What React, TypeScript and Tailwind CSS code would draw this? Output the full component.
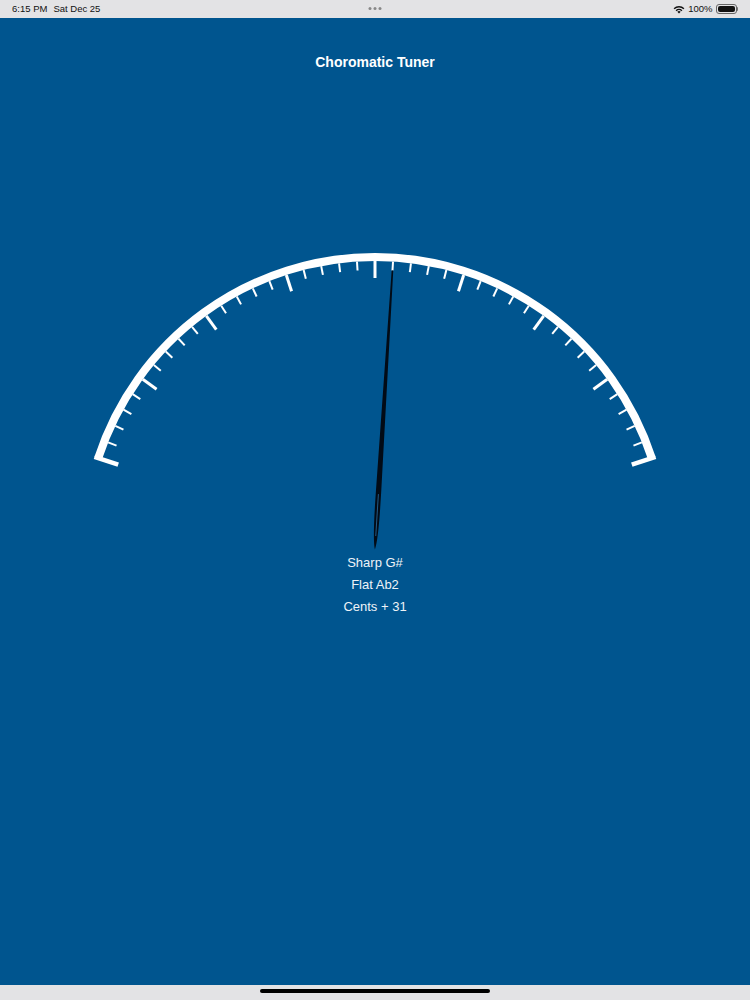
import React from "react";

const CX = 375;
const CY = 308;

function polar(r: number, deg: number) {
  const a = (deg * Math.PI) / 180;
  return { x: CX + r * Math.sin(a), y: CY - r * Math.cos(a) };
}

function Gauge() {
  const ticks = [];
  for (let i = 0; i <= 40; i++) {
    const ang = -72 + 3.6 * i;
    let r1 = 287;
    let r2 = 278;
    let w = 2;
    if (i === 0 || i === 40) {
      r1 = 295;
      r2 = 270;
      w = 4.5;
    } else if (i % 5 === 0) {
      r2 = 270;
      w = 3;
    }
    const p1 = polar(r1, ang);
    const p2 = polar(r2, ang);
    ticks.push(
      <line key={i} x1={p1.x} y1={p1.y} x2={p2.x} y2={p2.y} stroke="#ffffff" strokeWidth={w} />
    );
  }
  const s = polar(291, -72);
  const e = polar(291, 72);
  return (
    <svg width="750" height="312" viewBox="0 0 750 312" className="block overflow-visible">
      <path
        d={`M ${s.x} ${s.y} A 291 291 0 0 1 ${e.x} ${e.y}`}
        fill="none"
        stroke="#ffffff"
        strokeWidth={8}
      />
      {ticks}
      <g transform={`translate(${CX} ${CY}) rotate(3.6)`}>
        <path
          d="M -0.8 -278 L 0.8 -278 L 2.6 -64 C 2.9 -34 2.6 -7 0 1.5 C -2.6 -7 -2.9 -34 -2.6 -64 Z"
          fill="#020b16"
        />
        <line x1="0" y1="-54" x2="0" y2="-12" stroke="#24608f" strokeWidth="0.9" />
      </g>
    </svg>
  );
}

export default function App() {
  return (
    <div
      className="w-[750px] h-[1000px] flex flex-col bg-[#00558f] overflow-hidden"
      style={{ fontFamily: '"Liberation Sans", Arial, sans-serif' }}
    >
      <div className="h-[18px] bg-[#e3e3e5] flex items-center px-[12px] text-[#111] text-[9.5px] relative">
        <span>6:15 PM</span>
        <span className="ml-[6px]">Sat Dec 25</span>
        <div className="absolute left-1/2 -translate-x-1/2 top-[7px] flex gap-[2px]">
          <span className="w-[3px] h-[3px] rounded-full bg-[#888]" />
          <span className="w-[3px] h-[3px] rounded-full bg-[#888]" />
          <span className="w-[3px] h-[3px] rounded-full bg-[#888]" />
        </div>
        <div className="ml-auto flex items-center gap-[3px]">
          <svg width="12" height="9" viewBox="0 0 12 9">
            <path d="M6 8.6 L4.3 6.8 A2.5 2.5 0 0 1 7.7 6.8 Z" fill="#111" />
            <path d="M2.6 5.2 A4.9 4.9 0 0 1 9.4 5.2 L8.4 6.2 A3.5 3.5 0 0 0 3.6 6.2 Z" fill="#111" />
            <path d="M0.6 3.2 A7.7 7.7 0 0 1 11.4 3.2 L10.4 4.2 A6.3 6.3 0 0 0 1.6 4.2 Z" fill="#111" />
          </svg>
          <span>100%</span>
          <div className="flex items-center">
            <div className="w-[21px] h-[10px] rounded-[3px] border border-[#666] p-[1px]">
              <div className="w-full h-full rounded-[2px] bg-[#111]" />
            </div>
            <div className="w-[1.5px] h-[4px] bg-[#777] rounded-r-sm" />
          </div>
        </div>
      </div>
      <div className="flex-1 flex flex-col items-center">
        <div className="mt-[35px] text-white font-bold text-[14px] leading-[18px]">
          Choromatic Tuner
        </div>
        <div className="mt-[169px]">
          <Gauge />
        </div>
        <div className="flex flex-col items-center text-[#eef3f8] text-[13px] leading-[22px]">
          <span>Sharp G#</span>
          <span>Flat Ab2</span>
          <span>Cents + 31</span>
        </div>
      </div>
      <div className="h-[15px] bg-[#e3e3e5] flex justify-center pt-[4px]">
        <div className="w-[230px] h-[4px] rounded-full bg-black" />
      </div>
    </div>
  );
}
